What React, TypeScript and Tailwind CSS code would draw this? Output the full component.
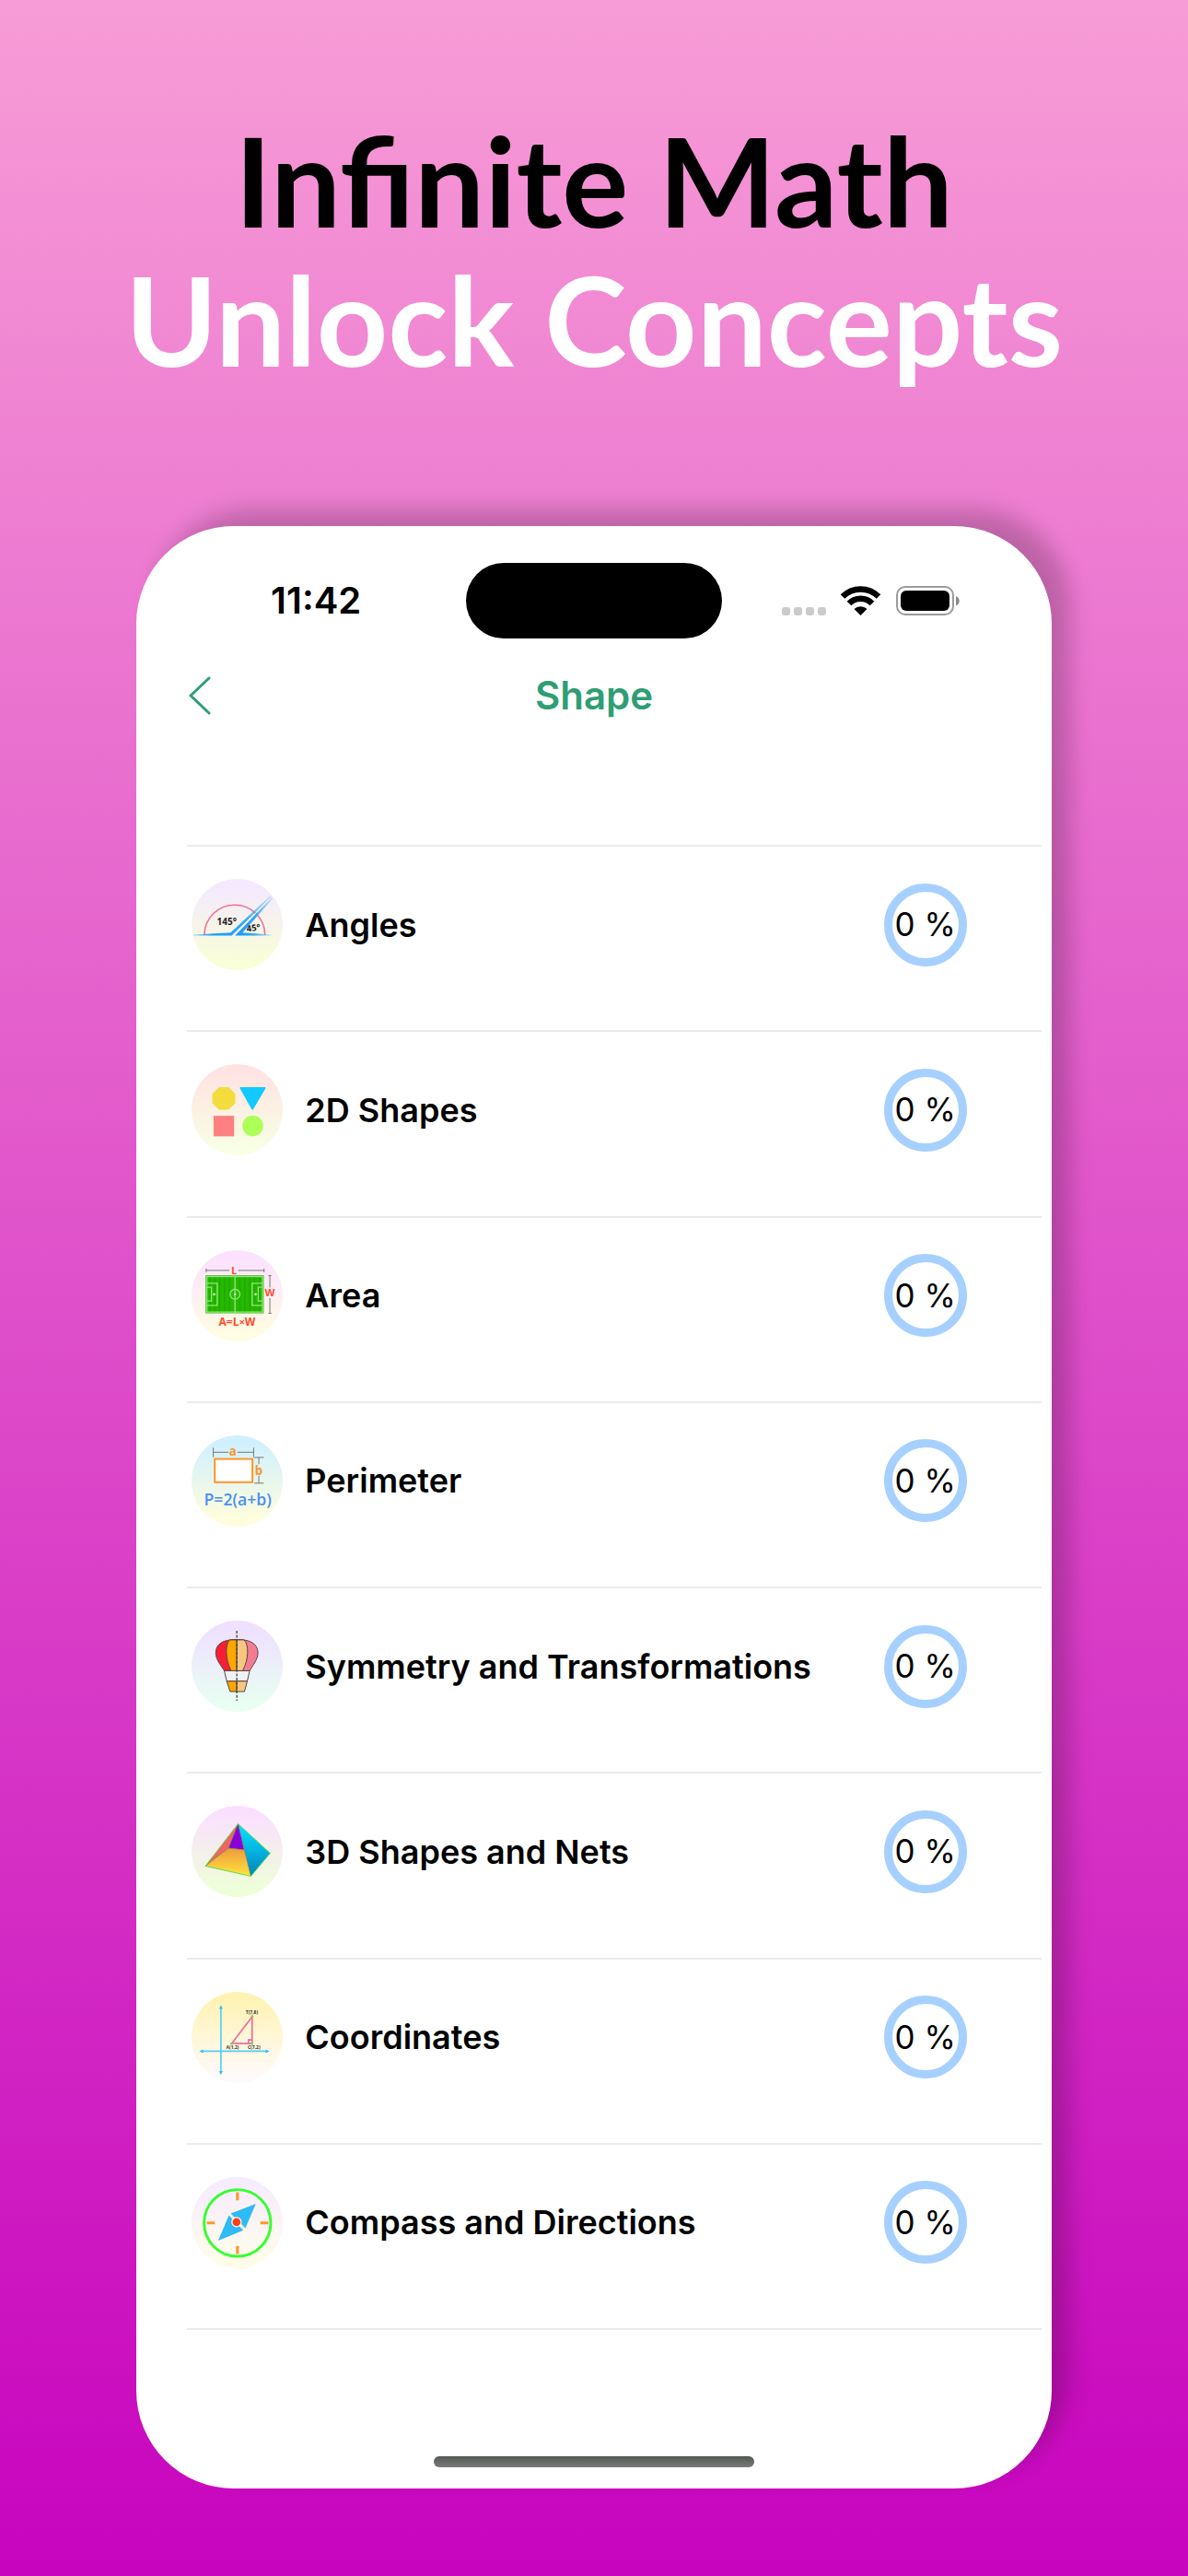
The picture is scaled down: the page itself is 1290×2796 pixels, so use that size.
import type { ReactNode } from 'react';

type Topic = {
  name: string;
  progress: number;
  from: string;
  to: string;
  art: ReactNode;
};

const AnglesArt = () => (
  <>
    <defs>
      <linearGradient id="ray-left" x1="0" x2="1">
        <stop offset="0" stopColor="#1a9bff" stopOpacity="0.3" />
        <stop offset="0.25" stopColor="#1a9bff" />
        <stop offset="0.65" stopColor="#2ba6f7" />
        <stop offset="1" stopColor="#2ba6f7" stopOpacity="0.15" />
      </linearGradient>
      <linearGradient id="ray-right" x1="0" x2="1">
        <stop offset="0" stopColor="#1a9bff" />
        <stop offset="0.5" stopColor="#2ba6f7" />
        <stop offset="1" stopColor="#2ba6f7" stopOpacity="0.15" />
      </linearGradient>
    </defs>
    <path d="M42 183a99 98 0 0 1 198 0" fill="none" stroke="#f0709a" strokeWidth="5" />
    <path d="M5 182L128 175L257 55L262 58L138 178L132 185L5 185Z" fill="url(#ray-left)" />
    <path d="M142 185L262 60L266 64L167 175L262 182V185Z" fill="url(#ray-right)" />
    <path d="M138 187L255 65" stroke="#fbf8ee" strokeWidth="3" />
    <g fill="#222" fontFamily="'Open Sans', sans-serif" fontWeight="700">
      <text x="83" y="150" fontSize="30">145°</text>
      <text x="181" y="173" fontSize="29" transform="rotate(-7 181 173)">45°</text>
    </g>
  </>
);

const FlatShapesArt = () => (
  <>
    <path d="M90 75H121L143 97V128L121 149H90L68 128V97Z" fill="#f4dc3c" />
    <path d="M161 78H239L199 146Z" fill="#12caff" stroke="#12caff" strokeWidth="6" strokeLinejoin="round" />
    <rect x="72" y="169" width="67" height="67" fill="#ff8080" />
    <circle cx="200" cy="202" r="34" fill="#aeff57" />
  </>
);

const AreaArt = () => (
  <>
    <rect x="46" y="82" width="190" height="124" fill="#27b800" />
    <path d="M60 84V204M76 84V204M92 84V204M108 84V204M124 84V204M158 84V204M174 84V204M190 84V204M206 84V204M222 84V204" stroke="#1fa900" strokeWidth="4" />
    <g fill="none" stroke="#8fe87c" strokeWidth="4">
      <rect x="50" y="86" width="182" height="116" />
      <path d="M142 84V204M50 108H84V180H50M50 121H65V166H50M232 108H198V180H232M232 121H218V166H232" />
      <circle cx="142" cy="144" r="16" />
    </g>
    <g fill="#c9f7bf">
      <circle cx="142" cy="144" r="4" />
      <circle cx="74" cy="144" r="4" />
      <circle cx="209" cy="144" r="4" />
    </g>
    <path d="M47 66H124M152 66H237M48 60V72M237 60V72M256 84V122M256 156V205M251 83H261M251 206H261" stroke="#777" strokeWidth="3" />
    <g fill="#ff4b2b" fontFamily="'Open Sans', sans-serif" fontWeight="700" textAnchor="middle">
      <text x="139" y="77" fontSize="34">L</text>
      <text x="256" y="150" fontSize="34">W</text>
      <text x="149" y="246" fontSize="36">A=L<tspan fontSize="34">×</tspan>W</text>
    </g>
  </>
);

const PerimeterArt = () => (
  <>
    <rect x="76" y="77" width="123" height="76" fill="#fff" stroke="#ff9429" strokeWidth="6" />
    <path d="M70 55H121M150 55H203M71 40V71M203 40V71M205 72H236M205 156H236M220 72V94M220 132V156" stroke="#777" strokeWidth="3" />
    <g fontFamily="'Open Sans', sans-serif" fontWeight="700" textAnchor="middle">
      <text x="135" y="66" fontSize="40" fill="#ff9429">a</text>
      <text x="220" y="128" fontSize="40" fill="#ff9429">b</text>
      <text x="151" y="229" fontSize="53" fontWeight="600" fill="#4a8ef5">P=2(a+b)</text>
    </g>
  </>
);

const BalloonArt = () => (
  <>
    <g stroke="#5a4444" strokeWidth="3" strokeLinejoin="round">
      <path d="M148 62C104 61 79 76 79 106C80 128 94 143 107 164H148Z" fill="#f61f35" />
      <path d="M148 62C192 61 217 76 217 106C216 128 202 143 190 164H148Z" fill="#f27d92" />
      <path d="M148 63H124C109 80 111 127 129 164H148Z" fill="#ffa600" />
      <path d="M148 63H172C188 80 187 127 167 164H148Z" fill="#f6c780" />
      <path d="M107 164H190L182 198H115Z" fill="#f2f1f6" />
      <path d="M115 198H148V232H126Z" fill="#ffa600" />
      <path d="M148 198H182L173 232H148Z" fill="#f6c780" />
    </g>
    <path d="M148 33V262" stroke="#444" strokeWidth="4" strokeDasharray="9 5" />
  </>
);

const PyramidArt = () => (
  <>
    <defs>
      <linearGradient id="pyramid-blue" x1="0" y1="0" x2="0" y2="1">
        <stop offset="0.1" stopColor="#06dcff" />
        <stop offset="1" stopColor="#0083bb" />
      </linearGradient>
      <linearGradient id="pyramid-gold" x1="0" y1="0" x2="0" y2="1">
        <stop offset="0" stopColor="#f0983c" />
        <stop offset="1" stopColor="#ffe63c" />
      </linearGradient>
    </defs>
    <path d="M152 59L45 197L121 138Z" fill="#f06464" />
    <path d="M152 59L121 138L172 144Z" fill="#8a00d8" />
    <path d="M121 138L172 144L194 230L45 197Z" fill="url(#pyramid-gold)" />
    <path d="M152 59L257 155L194 230Z" fill="url(#pyramid-blue)" />
    <path d="M152 59L121 138L45 197M121 138L172 144M152 59L194 230" fill="none" stroke="#5b7a4c" strokeWidth="2" />
    <path d="M152 59L257 155L194 230L45 197Z" fill="none" stroke="#5fe04c" strokeWidth="3" strokeLinejoin="round" />
  </>
);

const CoordinatesArt = () => (
  <>
    <path d="M96 50V266M32 194H248" stroke="#4fd0f5" strokeWidth="5" />
    <path d="M96 43L102 56H90ZM96 272L102 259H90ZM25 194L38 188V200ZM255 194L242 188V200Z" fill="#2cc5f5" />
    <path d="M132 168L198 81V169ZM186 169V157H198" fill="none" stroke="#ee6a9c" strokeWidth="5" />
    <g fill="#6bdc3a">
      <circle cx="198" cy="80" r="4" />
      <circle cx="131" cy="169" r="4" />
      <circle cx="198" cy="169" r="4" />
    </g>
    <g fill="#333" fontFamily="'Open Sans', sans-serif" fontWeight="700" fontSize="15" textAnchor="middle">
      <text x="197" y="72">T(7,8)</text>
      <text x="134" y="186">A(1,2)</text>
      <text x="204" y="186">C(7,2)</text>
    </g>
  </>
);

const CompassArt = () => (
  <>
    <circle cx="150" cy="150" r="109" fill="none" stroke="#35ff2f" strokeWidth="9" />
    <path d="M150 50V76M150 225V251M50 150H76M225 150H251" stroke="#ff9529" strokeWidth="9" />
    <path d="M210 87L128 119L176 167Z" fill="#2fbbf5" />
    <path d="M87 208L122 125L169 174Z" fill="#2fbbf5" />
    <circle cx="147" cy="147" r="17" fill="#fdf3f8" />
    <circle cx="147" cy="147" r="13" fill="#ff4013" />
  </>
);

const topics: Topic[] = [
  { name: 'Angles', progress: 0, from: '#f4e9ff', to: '#f9ffd6', art: <AnglesArt /> },
  { name: '2D Shapes', progress: 0, from: '#ffe3e3', to: '#f8ffe4', art: <FlatShapesArt /> },
  { name: 'Area', progress: 0, from: '#fce2ff', to: '#fffde2', art: <AreaArt /> },
  { name: 'Perimeter', progress: 0, from: '#d0f0ff', to: '#fffddc', art: <PerimeterArt /> },
  { name: 'Symmetry and Transformations', progress: 0, from: '#efe0ff', to: '#e8fff2', art: <BalloonArt /> },
  { name: '3D Shapes and Nets', progress: 0, from: '#fbdfff', to: '#eeffd8', art: <PyramidArt /> },
  { name: 'Coordinates', progress: 0, from: '#fff3b4', to: '#fffafa', art: <CoordinatesArt /> },
  { name: 'Compass and Directions', progress: 0, from: '#f7ecff', to: '#fffdea', art: <CompassArt /> },
];

function TopicIcon({ topic, id }: { topic: Topic; id: string }) {
  return (
    <svg viewBox="0 0 298 298" className="size-[99px] shrink-0" aria-hidden="true">
      <defs>
        <linearGradient id={id} x1="0" y1="0" x2="0" y2="1">
          <stop offset="0.08" stopColor={topic.from} />
          <stop offset="0.92" stopColor={topic.to} />
        </linearGradient>
      </defs>
      <circle cx="149" cy="149" r="149" fill={`url(#${id})`} />
      {topic.art}
    </svg>
  );
}

function StatusBar() {
  return (
    <div className="grid grid-cols-[1fr_auto_1fr] items-center">
      <div className="pl-8 text-center text-[40px] leading-none font-semibold">11:42</div>
      <div className="h-[82px] w-[278px] rounded-full bg-black" />
      <div className="flex items-center justify-end pr-[99px]">
        <svg viewBox="0 0 196 32" className="h-8 w-[196px]" aria-hidden="true">
          <g fill="#cbcbcb">
            <rect x="2" y="23" width="9" height="9" rx="3" />
            <rect x="15" y="23" width="9" height="9" rx="3" />
            <rect x="28" y="23" width="9" height="9" rx="3" />
            <rect x="41" y="23" width="9" height="9" rx="3" />
          </g>
          <g fill="none" stroke="#000" strokeWidth="6.500">
            <path d="M68 11.500A27.500 27.500 0 0 1 107 11.500" />
            <path d="M75 19A17.500 17.500 0 0 1 100 19" />
          </g>
          <path d="M80.500 25A10 10 0 0 1 94.500 25L87.500 32Z" />
          <rect x="127" y="1" width="61" height="30" rx="9" fill="none" stroke="#9a9a9a" strokeWidth="2" />
          <rect x="131" y="5" width="53" height="22" rx="6" />
          <path d="M191 11C196 13 196 19.500 191 21.500Z" fill="#8a8a8a" />
        </svg>
      </div>
    </div>
  );
}

export default function App() {
  return (
    <main className="flex min-h-screen flex-col items-center bg-linear-to-b/srgb from-[#f79cd6] to-[#c704be] pt-[120px] pb-[95px] font-['Inter',sans-serif] text-black">
      <h1 className="text-center font-['Lato',sans-serif] text-[135px] leading-[151px] font-bold">
        Infinite Math
        <span className="block text-white">Unlock Concepts</span>
      </h1>

      <section className="mt-[149px] flex w-[77%] flex-1 flex-col rounded-[106px] bg-white pt-10 pb-[23px] shadow-[20px_-18px_24px_rgba(0,0,0,0.2)]">
        <StatusBar />

        <header className="mt-[30px] grid h-16 grid-cols-[1fr_auto_1fr] items-center px-[55px] text-[#2f9e74]">
          <button type="button" aria-label="Back" className="flex h-16 w-16 items-center">
            <svg viewBox="0 0 28 44" className="h-11 w-7" fill="none" stroke="currentColor" strokeWidth="3" strokeLinecap="round" strokeLinejoin="round">
              <path d="M24 3L4 22L24 41" />
            </svg>
          </button>
          <h2 className="text-[42px] leading-none font-semibold">Shape</h2>
        </header>

        <ul className="mt-[130px] mr-[11px] ml-[55px] flex flex-1 flex-col border-t-2 border-[#ebebeb]">
          {topics.map((topic, i) => (
            <li key={topic.name} className="flex-1 border-b-2 border-[#ebebeb]">
              <a href={`#topic-${i}`} className="flex items-center pt-[35px] pr-[81px] pl-[5px]">
                <TopicIcon topic={topic} id={`topic-bg-${i}`} />
                <span className="ml-6 flex-1 text-[36px] leading-none font-semibold">{topic.name}</span>
                <span className="flex size-[90px] items-center justify-center rounded-full border-[9px] border-[#a6d0ff] text-[35px] leading-none whitespace-nowrap">
                  {topic.progress} %
                </span>
              </a>
            </li>
          ))}
        </ul>

        {/* Home indicator */}
        <div className="mt-[137px] h-3 w-[35%] self-center rounded-full bg-linear-to-b from-[#555955] to-[#7a7a7a]" />
      </section>
    </main>
  );
}
